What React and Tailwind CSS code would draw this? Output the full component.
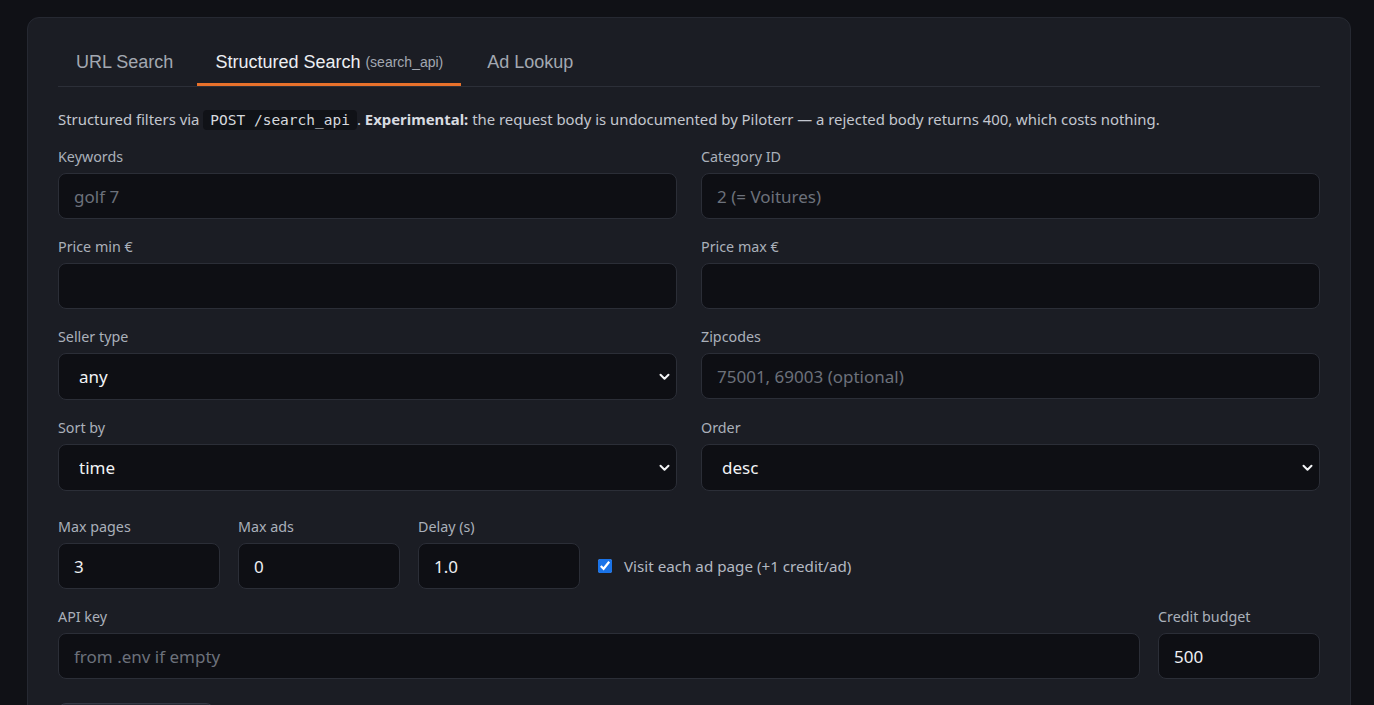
import React from "react";

const sans = { fontFamily: '"Noto Sans", "Open Sans", sans-serif' };

function Label({ children }) {
  return (
    <div className="h-[20px] mb-[6px] text-[14.3px] leading-[20px] text-[#aab0ba]">{children}</div>
  );
}

function TextInput({ placeholder, value }) {
  return (
    <input
      readOnly
      defaultValue={value}
      placeholder={placeholder}
      className="block w-full h-[46px] rounded-[8px] border border-[#2b2e37] bg-[#0e0f14] px-[15px] text-[17px] text-[#eef0f3] placeholder:text-[#6c717b] outline-none"
      style={sans}
    />
  );
}

function Select({ value }) {
  return (
    <div className="relative">
      <select
        defaultValue={value}
        className="block w-full h-[47px] appearance-none rounded-[8px] border border-[#2b2e37] bg-[#0e0f14] pl-[20px] pr-[36px] text-[17px] text-[#f1f3f6] outline-none"
        style={sans}
      >
        <option>{value}</option>
      </select>
      <svg
        className="pointer-events-none absolute right-[7px] top-1/2 -translate-y-1/2"
        width="11"
        height="8"
        viewBox="0 0 11 8"
        fill="none"
      >
        <path d="M1.5 1.8 L5.5 5.8 L9.5 1.8" stroke="#f3f4f6" strokeWidth="2" strokeLinecap="round" strokeLinejoin="round" />
      </svg>
    </div>
  );
}

function Field({ label, children }) {
  return (
    <div>
      <Label>{label}</Label>
      {children}
    </div>
  );
}

export default function App() {
  return (
    <div className="h-[705px] overflow-hidden bg-[#101116] pt-[17px]" style={sans}>
      <div className="ml-[27px] w-[1324px] h-[720px] rounded-[12px] border border-[#262932] bg-[#1b1d24] px-[30px] pt-[20px]">
        {/* tab strip */}
        <div className="flex border-b border-[#2c2f38]" style={{ fontFamily: '"Liberation Sans", Arial, sans-serif' }}>
          <button className="h-[48px] flex items-center pt-[3px] pl-[18px] pr-[18px] border-b-[3px] border-transparent text-[18px] text-[#a3a8b1]">
            URL Search
          </button>
          <button className="ml-[6px] h-[48px] flex items-center pt-[3px] px-[18px] border-b-[3px] border-[#e8712b] text-[18px] text-[#eceef2]">
            Structured Search
            <span className="ml-[5px] text-[14px] text-[#a3a8b1]">(search_api)</span>
          </button>
          <button className="ml-[10px] h-[48px] flex items-center pt-[3px] px-[16px] border-b-[3px] border-transparent text-[18px] text-[#a3a8b1]">
            Ad Lookup
          </button>
        </div>

        <p className="mt-[22px] text-[14.9px] leading-[20px] text-[#c3c7cf]">
          Structured filters via{" "}
          <code
            className="rounded-[4px] bg-[#101217] px-[7px] py-[2px] text-[14.5px] leading-[20px] text-[#d6d9de]"
            style={{ fontFamily: '"DejaVu Sans Mono", "Liberation Mono", monospace' }}
          >
            POST /search_api
          </code>
          . <strong className="font-bold text-[#d9dce1]">Experimental:</strong> the request body is undocumented by Piloterr — a rejected body returns 400, which costs nothing.
        </p>

        <div className="mt-[17px] grid grid-cols-2 gap-x-[24px] gap-y-[18px] items-start">
          <Field label="Keywords">
            <TextInput placeholder="golf 7" />
          </Field>
          <Field label="Category ID">
            <TextInput placeholder="2 (= Voitures)" />
          </Field>
          <Field label="Price min €">
            <TextInput />
          </Field>
          <Field label="Price max €">
            <TextInput />
          </Field>
          <Field label="Seller type">
            <Select value="any" />
          </Field>
          <Field label="Zipcodes">
            <TextInput placeholder="75001, 69003 (optional)" />
          </Field>
          <Field label="Sort by">
            <Select value="time" />
          </Field>
          <Field label="Order">
            <Select value="desc" />
          </Field>
        </div>

        <div className="mt-[26px] flex items-end gap-[18px]">
          <div className="w-[162px]">
            <Field label="Max pages">
              <TextInput value="3" />
            </Field>
          </div>
          <div className="w-[162px]">
            <Field label="Max ads">
              <TextInput value="0" />
            </Field>
          </div>
          <div className="w-[162px]">
            <Field label="Delay (s)">
              <TextInput value="1.0" />
            </Field>
          </div>
          <label className="h-[46px] flex items-center gap-[12px] text-[15.2px] text-[#b4b9c2]">
            <input type="checkbox" defaultChecked className="w-[14px] h-[14px] accent-[#1a73e8]" />
            Visit each ad page (+1 credit/ad)
          </label>
        </div>

        <div className="mt-[18px] flex gap-[18px]">
          <div className="flex-1">
            <Field label="API key">
              <TextInput placeholder="from .env if empty" />
            </Field>
          </div>
          <div className="w-[162px]">
            <Field label="Credit budget">
              <TextInput value="500" />
            </Field>
          </div>
        </div>

        {/* submit button, only its top edge sits inside the viewport */}
        <button
          aria-label="Run search"
          className="block mt-[24px] h-[40px] w-[156px] rounded-[8px] border border-[#353945] bg-[#262a33]"
        />
      </div>
    </div>
  );
}
